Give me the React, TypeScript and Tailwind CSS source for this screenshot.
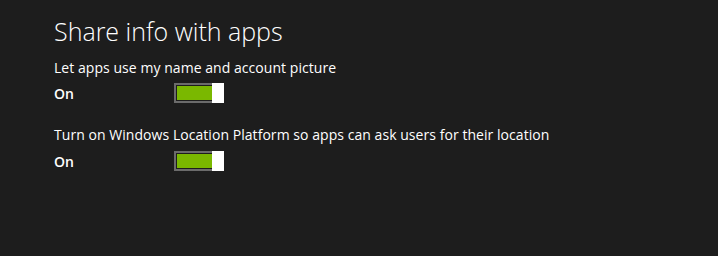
const SETTINGS = [
    { label: "Let apps use my name and account picture", on: true },
    { label: "Turn on Windows Location Platform so apps can ask users for their location", on: true },
];

function Toggle({ on }: { on: boolean }) {
    return (
        <div className="flex h-[20px]">
            <div className="w-[38px] h-[20px] border-2 border-r-0 border-[#6b6b6b] pl-[1px] py-[1px] bg-[#1d1d1d]">
                <div className={`w-full h-full ${on ? "bg-[#7ab800]" : "bg-transparent"}`} />
            </div>
            <div className="w-[12px] h-[20px] bg-white" />
        </div>
    );
}

export default function App() {
    return (
        <div className="w-[718px] h-[256px] bg-[#1d1d1d] text-white pl-[54px] pt-[18px] font-['Open_Sans',sans-serif]">
            <h1 className="text-[25px] leading-[26px] font-light">Share info with apps</h1>
            {SETTINGS.map((s, i) => (
                <div key={i} className={i === 0 ? "mt-[14px]" : "mt-[21px]"}>
                    <div className="text-[14px] leading-[20px] tracking-[0.05px]">{s.label}</div>
                    <div className={`flex items-start ${i === 0 ? "mt-[5px]" : "mt-[6px]"}`}>
                        <div className="w-[120px] text-[14px] leading-[20px] font-semibold mt-[1px]">
                            {s.on ? "On" : "Off"}
                        </div>
                        <Toggle on={s.on} />
                    </div>
                </div>
            ))}
        </div>
    );
}
